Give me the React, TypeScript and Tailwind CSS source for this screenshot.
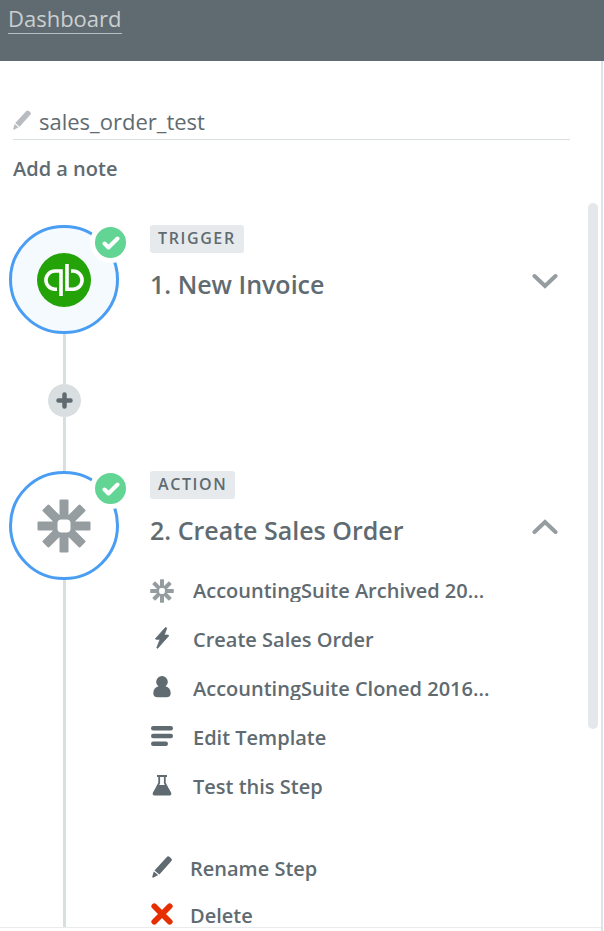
import { useState } from "react";
import type { ReactNode } from "react";

type IconProps = { className?: string };

function PencilIcon({ className }: IconProps) {
  return (
    <svg viewBox="0 0 20 22" className={className} fill="currentColor" aria-hidden="true">
      <path d="M14.600 1.200a2.200 2.200 0 0 1 3.100-.2l1.300 1.200a2.200 2.200 0 0 1 .2 3.100L7.400 18.400 2.500 14.400z" />
      <path d="M1.800 15.400 6.200 19.100 1.600 21.600a.9.900 0 0 1-1.300-1z" />
    </svg>
  );
}

function QuickBooksLogo({ className }: IconProps) {
  return (
    <svg viewBox="0 0 54 54" className={className} aria-hidden="true">
      <circle cx="27" cy="27" r="27" fill="#24a308" />
      <g fill="none" stroke="#fff" strokeWidth="3.600">
        <path d="M24 43V18H18a9 9 0 0 0 0 18.200h2" />
        <path d="M30 11v25.200h6a9 9 0 0 0 0-18.200h-2" />
      </g>
    </svg>
  );
}

function ZapierIcon({ className }: IconProps) {
  return (
    <svg viewBox="0 0 54 54" className={className} aria-hidden="true">
      <g fill="#959da1">
        {[0, 45, 90, 135].map((angle) => (
          <rect key={angle} x="22.500" y="0.500" width="9" height="53" rx="1" transform={`rotate(${angle} 27 27)`} />
        ))}
        <circle cx="27" cy="27" r="12" />
      </g>
      <rect x="20.500" y="20.500" width="13" height="13" rx="4" fill="#fff" />
    </svg>
  );
}

function BoltIcon({ className }: IconProps) {
  return (
    <svg viewBox="0 0 14 22" className={className} fill="currentColor" stroke="currentColor" strokeWidth="0.800" strokeLinejoin="round" aria-hidden="true">
      <path d="M10.200.8.7 11.400c-.3.400-.1.900.4.900h4L1.900 20.400c-.2.800.5 1.200 1 .6L13.500 9.100c.4-.4.100-1-.4-1H9.200l2.400-6.400c.2-.9-.7-1.700-1.400-.9z" />
    </svg>
  );
}

function PersonIcon({ className }: IconProps) {
  return (
    <svg viewBox="0 0 18 22" className={className} fill="currentColor" aria-hidden="true">
      <path d="M9 0a5.800 5.800 0 0 1 5.800 5.800c0 2-.9 3.400-2.300 4.500 3.400 1 5.200 3.600 5.200 7 0 2.700-1.500 3.900-4.300 3.900H4.600c-2.800 0-4.300-1.200-4.300-3.900 0-3.400 1.800-6 5.200-7-1.400-1.100-2.300-2.500-2.300-4.500A5.800 5.800 0 0 1 9 0z" />
    </svg>
  );
}

function TemplateIcon({ className }: IconProps) {
  return (
    <svg viewBox="0 0 22 20" className={className} fill="currentColor" aria-hidden="true">
      <rect x="0" y="0" width="22" height="4.400" rx="2.200" />
      <rect x="0" y="7.800" width="22" height="4.400" rx="2.200" />
      <rect x="0" y="15.600" width="17" height="4.400" rx="2.200" />
    </svg>
  );
}

function FlaskIcon({ className }: IconProps) {
  return (
    <svg viewBox="0 0 20 21" className={className} aria-hidden="true">
      <path d="M5 1h10M7.200 1v7L2 18M12.800 1v7L18 18" fill="none" stroke="currentColor" strokeWidth="1.800" />
      <path d="M5.700 10h8.600l4.800 7.800c.7 1.300-.1 2.700-1.400 2.700H2.300c-1.300 0-2.100-1.400-1.400-2.700z" fill="currentColor" />
    </svg>
  );
}

function CrossIcon({ className }: IconProps) {
  return (
    <svg viewBox="0 0 22 22" className={className} fill="none" stroke="currentColor" strokeWidth="5.800" strokeLinecap="round" aria-hidden="true">
      <path d="m3.300 3.300 15.400 15.400M18.700 3.300 3.300 18.700" />
    </svg>
  );
}

function ChevronIcon({ open }: { open: boolean }) {
  return (
    <svg viewBox="0 0 26 16" className="w-[26px]" fill="none" stroke="#959da1" strokeWidth="4" strokeLinecap="round" aria-hidden="true">
      <path d={open ? "m2.500 13 10.500-10 10.500 10" : "m2.500 3 10.500 10 10.500-10"} />
    </svg>
  );
}

function StepBadge({ tinted, children }: { tinted?: boolean; children: ReactNode }) {
  return (
    <div className={`relative flex h-[109px] w-[110px] shrink-0 items-center justify-center rounded-full border-3 border-[#499df3] ${tinted ? "bg-[#f5faff]" : "bg-white"}`}>
      {children}
      <span className="absolute -top-1.5 -right-[15px] flex size-[41px] items-center justify-center rounded-full border-5 border-white bg-[#62d493]">
        <svg viewBox="0 0 18 14" className="w-[18px]" fill="none" stroke="#fff" strokeWidth="4" strokeLinecap="round" strokeLinejoin="round" aria-hidden="true">
          <path d="m2.500 7.500 4 4 9-9" />
        </svg>
      </span>
    </div>
  );
}

function StepHeading({ kind, title, open, onToggle }: { kind: string; title: string; open: boolean; onToggle: () => void }) {
  return (
    <>
      <span className="inline-block h-7 rounded-[3px] bg-[#e6eaed] px-2 text-base leading-[27px] font-semibold tracking-widest">{kind}</span>
      <div className="flex items-center pt-[11px]">
        <h2 className="flex-1 text-[25px] leading-10 font-semibold">{title}</h2>
        <button type="button" aria-label={`Toggle ${title}`} aria-expanded={open} onClick={onToggle} className="mr-3 pb-1.5">
          <ChevronIcon open={open} />
        </button>
      </div>
    </>
  );
}

function MenuItem({ icon, clipped, tight, children }: { icon: ReactNode; clipped?: boolean; tight?: boolean; children: ReactNode }) {
  return (
    <li>
      <button type="button" className={`flex h-[23px] w-full items-center text-left ${tight ? "gap-4" : "gap-[19px]"}`}>
        <span className="flex w-6 shrink-0 justify-center">{icon}</span>
        <span className={clipped ? "truncate leading-[23px]" : "leading-[23px]"}>{children}</span>
      </button>
    </li>
  );
}

export default function App() {
  const [name, setName] = useState("sales_order_test");
  const [triggerOpen, setTriggerOpen] = useState(false);
  const [actionOpen, setActionOpen] = useState(true);

  return (
    <div className="flex h-screen flex-col bg-white font-['Open_Sans',sans-serif] text-[#5f6b71]">
      <header className="h-[61px] shrink-0 bg-[#5f6b70] px-2 pt-1">
        <a href="#" className="inline-block border-b border-[#b5bfc3] text-[22px] leading-[29px] text-[#cbcfd1]">Dashboard</a>
      </header>
      <main className="mr-px flex min-h-0 flex-1 flex-col border-r-2 border-[#dde4e9] pb-[3px]">
        <div className="px-[13px] pt-11">
          <label className="mr-[18px] flex items-center gap-2 border-b border-[#d9dee0]">
            <PencilIcon className="mb-1 h-5 w-[18px] text-[#b8bcc1]" />
            <input aria-label="Name" value={name} onChange={(e) => setName(e.target.value)} className="h-[34px] min-w-0 flex-1 pb-0.5 text-[22px] outline-none" />
          </label>
          <button type="button" className="mt-4 block text-xl leading-[26px] font-semibold">Add a note</button>
        </div>
        <div className="mt-[21px] flex min-h-0 flex-1 border-b border-[#e9ebed] pr-[3px]">
          <div className="min-w-0 flex-1 overflow-hidden pt-[22px] pl-[9px]">
            <div className="flex h-full flex-col">
              <section className="flex shrink-0 gap-[31px]">
                <div className="flex flex-col items-center">
                  <StepBadge tinted>
                    <QuickBooksLogo className="size-[54px]" />
                  </StepBadge>
                  <div className="h-[50px] w-[3px] bg-[#d9dee0]" />
                  <button type="button" aria-label="Add step" className="flex size-[33px] items-center justify-center rounded-full bg-[#d9dee0]">
                    <svg viewBox="0 0 17 17" className="size-[17px]" stroke="#5f6b70" strokeWidth="4.500" strokeLinecap="round" aria-hidden="true">
                      <path d="M8.500 2.500v12M2.500 8.500h12" />
                    </svg>
                  </button>
                  <div className="h-[54px] w-[3px] bg-[#d9dee0]" />
                </div>
                <div className="min-w-0 flex-1 pr-[18px]">
                  <StepHeading kind="TRIGGER" title="1. New Invoice" open={triggerOpen} onToggle={() => setTriggerOpen(!triggerOpen)} />
                </div>
              </section>
              <section className="flex min-h-0 flex-1 gap-[31px]">
                <div className="flex flex-col items-center">
                  <StepBadge>
                    <ZapierIcon className="size-[54px]" />
                  </StepBadge>
                  <div className="w-[3px] flex-1 bg-[#d9dee0]" />
                </div>
                <div className="min-w-0 flex-1 pr-[18px]">
                  <StepHeading kind="ACTION" title="2. Create Sales Order" open={actionOpen} onToggle={() => setActionOpen(!actionOpen)} />
                  {actionOpen && (
                    <div className="text-xl font-semibold">
                      <ul className="flex flex-col gap-[26px] pt-[29px]">
                        <MenuItem clipped icon={<ZapierIcon className="size-6" />}>AccountingSuite Archived 20...</MenuItem>
                        <MenuItem icon={<BoltIcon className="mb-[3px] h-[22px]" />}>Create Sales Order</MenuItem>
                        <MenuItem clipped icon={<PersonIcon className="mb-[3px] h-[22px]" />}>AccountingSuite Cloned 2016...</MenuItem>
                        <MenuItem icon={<TemplateIcon className="mb-[3px] h-5" />}>Edit Template</MenuItem>
                        <MenuItem icon={<FlaskIcon className="mb-[3px] h-[21px]" />}>Test this Step</MenuItem>
                      </ul>
                      <ul className="flex flex-col gap-6 pt-[59px]">
                        <MenuItem tight icon={<PencilIcon className="mb-[3px] h-[22px]" />}>Rename Step</MenuItem>
                        <MenuItem tight icon={<CrossIcon className="mb-[3px] size-[22px] text-[#e62e00]" />}>Delete</MenuItem>
                      </ul>
                    </div>
                  )}
                </div>
              </section>
            </div>
          </div>
          <div className="h-[526px] w-2.5 shrink-0 rounded-full bg-[#e4e8eb]" />
        </div>
      </main>
    </div>
  );
}
